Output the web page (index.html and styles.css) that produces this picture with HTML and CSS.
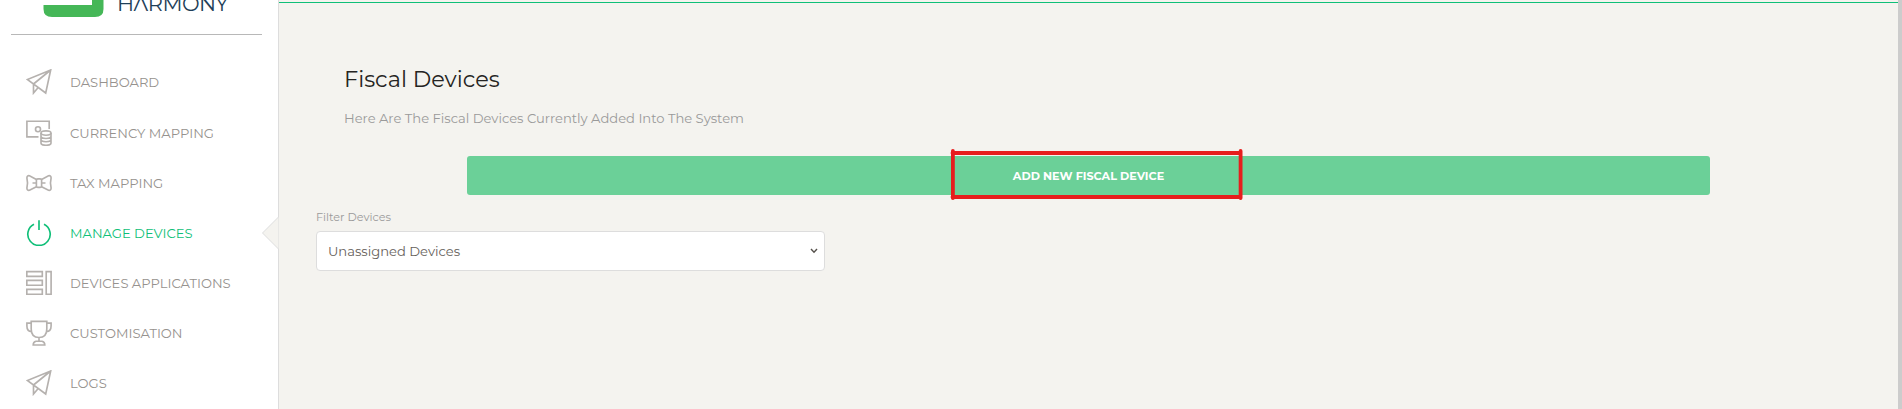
FILE: index.html
```html
<!DOCTYPE html>
<html>
    <head lang="en">
        <meta charset="UTF-8">
        <title>Fiscal Devices</title>
        <link rel="stylesheet" href="styles.css">
    </head>
    <body>
    <div class="wrapper">
        <div class="sidebar">
            <div class="logo">
                <svg class="logo-mark" width="61" height="17" viewBox="0 0 61 17"><path d="M.5 5H49V0H60.5V9Q60.5 17 52 17H9Q.5 17 .5 9Z" fill="#45b757"/></svg>
                <span class="logo-text">H&Lambda;RMONY</span>
            </div>
            <ul class="nav">
                <li>
                    <svg class="icon" viewBox="0 0 26 26"><path d="M24.7 1L1.3 10.5L19.7 24ZM24.7 1L7.5 15V24L12 18.7"/></svg>
                    <span>DASHBOARD</span>
                </li>
                <li>
                    <svg class="icon" viewBox="0 0 26 26"><path d="M12.5 16.8H.9V1.2H23.2V9"/><circle cx="12" cy="9.2" r="2.5"/><ellipse cx="20" cy="13" rx="5" ry="2.2"/><path d="M15 13V23C15 26 25 26 25 23V13M15 16.3C15 19.2 25 19.2 25 16.3M15 19.6C15 22.5 25 22.5 25 19.6"/></svg>
                    <span>CURRENCY MAPPING</span>
                </li>
                <li>
                    <svg class="icon" viewBox="0 0 26 26"><rect x="10.4" y="8.8" width="5.2" height="8.6" rx="1.5"/><path d="M10.4 9.5L3.5 5.7Q.9 5.2 .9 8Q2.2 13 .9 18Q.9 20.8 3.5 20.3L10.4 16.7M15.6 9.5L22.5 5.7Q25.1 5.2 25.1 8Q23.8 13 25.1 18Q25.1 20.8 22.5 20.3L15.6 16.7M6.5 13H10.4M15.6 13H19.5"/></svg>
                    <span>TAX MAPPING</span>
                </li>
                <li class="active">
                    <svg class="icon" viewBox="0 0 26 26"><path d="M8 4.2A11.2 11.2 0 1 0 18 4.2M13 .3V10"/></svg>
                    <span>MANAGE DEVICES</span>
                    <svg class="pointer" width="18" height="34" viewBox="0 0 18 34"><path d="M17.5 1L1.5 17L17.5 33"/></svg>
                </li>
                <li>
                    <svg class="icon" viewBox="0 0 26 26"><path d="M.8 1.6H16.3V6.4H.8ZM.8 10.4H16.3V15.2H.8ZM.8 19.4H16.3V24.2H.8ZM20.2 1.6H25.1V24.2H20.2Z"/></svg>
                    <span>DEVICES APPLICATIONS</span>
                </li>
                <li>
                    <svg class="icon" viewBox="0 0 26 26"><path d="M5.2 1.3H20.8V9Q20.8 17.5 13 17.5Q5.2 17.5 5.2 9ZM5.2 3.1H.9V6Q.9 11.5 5.7 11.8M20.8 3.1H25.1V6Q25.1 11.5 20.3 11.8M13 17.5V21.2M10 21.2H16Q18.8 21.8 18.8 25H7.2Q7.2 21.8 10 21.2Z"/></svg>
                    <span>CUSTOMISATION</span>
                </li>
                <li>
                    <svg class="icon" viewBox="0 0 26 26"><path d="M24.7 1L1.3 10.5L19.7 24ZM24.7 1L7.5 15V24L12 18.7"/></svg>
                    <span>LOGS</span>
                </li>
            </ul>
        </div>
        <div class="main">
            <div class="header">
                <h4 class="title">Fiscal Devices</h4>
                <p class="category">Here Are The Fiscal Devices Currently Added Into The System</p>
            </div>
            <button class="btn">
                <span>ADD NEW FISCAL DEVICE</span>
                <svg class="highlight" width="293" height="51" viewBox="0 0 293 51"><path d="M2.6 4H289M2.6 48H289" stroke-width="4"/><path d="M2.9 2V49M290.6 2V49" stroke-width="3.8"/></svg>
            </button>
            <div class="filter">
                <label class="filter-label">Filter Devices</label>
                <div class="select">
                    <span>Unassigned Devices</span>
                    <svg width="8" height="6" viewBox="0 0 8 6"><path d="M1 1L4 4.3L7 1"/></svg>
                </div>
            </div>
        </div>
        <div class="scrollbar"></div>
    </div>
    </body>
</html>
```
FILE: styles.css
```css
*{
    margin:0;
    padding:0;
    box-sizing:border-box;
}
body{
    font-family:Montserrat, Inter, sans-serif;
    font-size:13.1px;
    overflow:hidden;
}
ul{
    list-style:none;
}
svg{
    display:block;
    flex:none;
    fill:none;
}
.wrapper{
    display:flex;
    height:409px;
    background:#f4f3ef;
}
.sidebar{
    width:279px;
    flex:none;
    background:#fff;
    border-right:1px solid #ddd;
}
.logo{
    display:flex;
    height:35px;
    margin:0 16px 0 11px;
    padding-left:32px;
    border-bottom:1px solid #b8b8b8;
}
.logo-text{
    margin:-10px 0 0 13px;
    color:#1f3f59;
    font-size:21px;
    font-weight:400;
    line-height:27px;
    letter-spacing:-.5px;
    white-space:nowrap;
}
.nav{
    padding-top:21.6px;
}
.nav li{
    position:relative;
    display:flex;
    align-items:center;
    height:50.1px;
    padding-left:26px;
    color:#96928e;
    white-space:nowrap;
}
.nav li:first-child{
    height:51.2px;
}
.nav .active{
    color:#0fbf78;
}
.icon{
    width:26px;
    height:26px;
    margin-right:18px;
    stroke:#b5b1ae;
    stroke-width:1.65;
}
.active .icon{
    stroke:#0fbf78;
}
.pointer{
    position:absolute;
    right:-1px;
    top:8px;
    fill:#f4f3ef;
    stroke:#ddd;
}
.main{
    flex:1;
    margin-top:2px;
    padding:0 188px 0 37px;
    border-top:1px solid #0fbf78;
}
.header{
    padding:61px 0 0 28px;
}
.title{
    color:#252422;
    font-size:22.4px;
    font-weight:400;
    line-height:30px;
}
.category{
    margin-top:14px;
    color:#9a9a9a;
    font-size:13.1px;
    line-height:20px;
}
.btn{
    position:relative;
    display:block;
    width:1243px;
    height:39px;
    margin:28px 0 0 151px;
    border:0;
    border-radius:3px;
    background:#6bd098;
    color:#fff;
    font-family:inherit;
    font-size:11.2px;
    font-weight:700;
}
.highlight{
    position:absolute;
    left:483px;
    top:-7px;
    stroke:#e71d1d;
    stroke-linecap:round;
}
.filter{
    width:509px;
    padding-top:14px;
}
.filter-label{
    display:block;
    color:#9a9a9a;
    font-size:11.2px;
    line-height:16px;
}
.select{
    display:flex;
    align-items:center;
    justify-content:space-between;
    height:40px;
    margin-top:6px;
    padding:0 6px 0 11px;
    border:1px solid #ddd;
    border-radius:4px;
    background:#fff;
    color:#66615b;
    font-size:13.1px;
}
.select svg{
    stroke:#55504b;
    stroke-width:1.4;
}
.scrollbar{
    width:4px;
    background:#ccc;
}
```
